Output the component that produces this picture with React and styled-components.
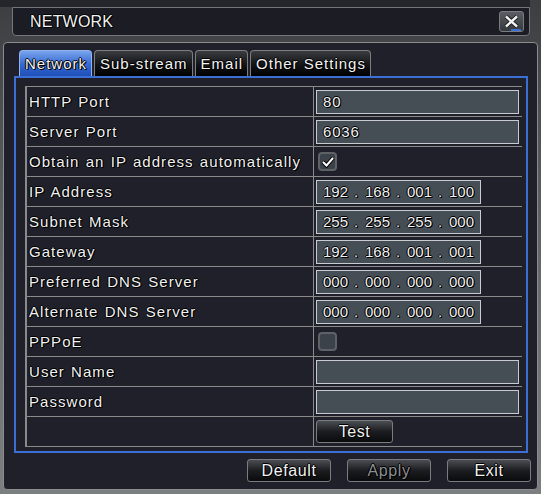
import styled, { createGlobalStyle } from "styled-components";

const GlobalStyle = createGlobalStyle`
  html, body {
    margin: 0;
    padding: 0;
    background: #4c4f52;
  }
  * {
    box-sizing: border-box;
  }
`;

const outline = `
  text-shadow: 1px 1px 0 #000, -1px 0 0 #000, 0 -1px 0 #000, 1px 0 0 #000;
`;

const Page = styled.div`
  width: 541px;
  height: 494px;
  overflow: hidden;
  background: linear-gradient(#3c3e42, #6a6d6e 60%, #7c7f7f);
  font-family: "Liberation Sans", Arial, sans-serif;
  color: #f2f2f2;
`;

const TopStrip = styled.div`
  width: 530px;
  height: 7px;
  background: #25262c;
`;

const TitleBar = styled.div`
  margin-left: 12px;
  width: 518px;
  height: 29px;
  display: flex;
  align-items: center;
  justify-content: space-between;
  padding: 0 5px 0 17px;
  background: #1c1d24;
  border: 1px solid #74777a;
  border-radius: 0 0 4px 4px;
`;

const Title = styled.div`
  font-size: 16px;
  letter-spacing: 0.2px;
  ${outline}
`;

const CloseButton = styled.div`
  position: relative;
  width: 25px;
  height: 21px;
  display: flex;
  align-items: center;
  justify-content: center;
  background: linear-gradient(#5a5d62, #35383c);
  border: 1px solid #7a7d80;
  border-radius: 3px;

  &::after {
    content: "";
    position: absolute;
    left: 11px;
    bottom: 0;
    width: 10px;
    height: 2px;
    background: #3b6fd6;
  }
`;

const Panel = styled.div`
  margin: 6px 3px 0 3px;
  width: 535px;
  height: 448px;
  background: #1f2029;
  border: 1px solid #8a8c8e;
  border-radius: 4px;
  display: flex;
  flex-direction: column;
`;

const Tabs = styled.div`
  display: flex;
  gap: 2px;
  margin: 7px 0 0 15px;
  height: 26px;
`;

const Tab = styled.div`
  height: 26px;
  padding: 0 4px 0 5px;
  display: flex;
  align-items: center;
  font-size: 15px;
  letter-spacing: 1px;
  border: 1px solid ${(p) => (p.$active ? "#8fb3f0" : "#7c7e82")};
  border-bottom: none;
  border-radius: 4px 4px 0 0;
  background: ${(p) =>
    p.$active
      ? "linear-gradient(#78a4ec, #3468d2 55%, #1f4fb8)"
      : "linear-gradient(#3a3b3f, #141518 55%, #000)"};
  ${outline}
`;

const Frame = styled.div`
  margin-left: 10px;
  width: 514px;
  height: 377px;
  border: 2px solid #3b6fd6;
  padding: 8px 4px 4px 9px;
`;

const Table = styled.div`
  display: grid;
  grid-template-columns: 287px 1fr;
  grid-auto-rows: 30px;
  border-top: 1px solid #8a8a8a;
  border-left: 2px solid #8a8a8a;
`;

const Label = styled.div`
  display: flex;
  align-items: center;
  padding-left: 2px;
  font-size: 15px;
  letter-spacing: 1.05px;
  word-spacing: 1px;
  border-right: 1px solid #8a8a8a;
  border-bottom: 1px solid #8a8a8a;
  ${outline}
`;

const Value = styled.div`
  display: flex;
  align-items: center;
  padding-left: 2px;
  border-bottom: 1px solid #8a8a8a;
`;

const Field = styled.div`
  width: ${(p) => (p.$short ? "165px" : "203px")};
  height: 24px;
  display: flex;
  align-items: center;
  padding-left: 6px;
  background: #454d55;
  border: 1px solid #c8ccd0;
  font-size: 15px;
  letter-spacing: 0.8px;
  ${outline}
`;

const Segment = styled.span`
  width: 25px;
  letter-spacing: 0;
  font-size: 15px;
`;

const Dot = styled.span`
  width: 17px;
  text-align: center;
`;

const CheckBox = styled.div`
  margin-left: 2px;
  width: 19px;
  height: 19px;
  display: flex;
  align-items: center;
  justify-content: center;
  background: #3c4249;
  border: 2px solid #5e6166;
  border-radius: 4px;
`;

const Button = styled.div`
  width: ${(p) => p.$w || 84}px;
  height: 23px;
  display: flex;
  align-items: center;
  justify-content: center;
  font-size: 16px;
  letter-spacing: 0.6px;
  color: ${(p) => (p.$disabled ? "#8d8f92" : "#f2f2f2")};
  background: linear-gradient(#4a4d52, #1c1d20 50%, #0a0b0d);
  border: 1px solid #7a7c80;
  border-radius: 3px;
  ${outline}
`;

const Footer = styled.div`
  display: flex;
  justify-content: flex-end;
  gap: 16px;
  margin-top: 6px;
  padding-right: 6px;
`;

const Ip = ({ value }) => {
  const parts = value.split(".");
  return (
    <Field $short>
      {parts.map((p, i) => (
        <span key={i} style={{ display: "contents" }}>
          {i > 0 && <Dot>.</Dot>}
          <Segment>{p}</Segment>
        </span>
      ))}
    </Field>
  );
};

const Check = ({ checked }) => (
  <CheckBox>
    {checked && (
      <svg width="14" height="12" viewBox="0 0 14 12">
        <path d="M2 6 L5.5 9.5 L12 2" fill="none" stroke="#000" strokeWidth="4" />
        <path d="M2 6 L5.5 9.5 L12 2" fill="none" stroke="#fff" strokeWidth="2" />
      </svg>
    )}
  </CheckBox>
);

const rows = [
  ["HTTP Port", <Field>80</Field>],
  ["Server Port", <Field>6036</Field>],
  ["Obtain an IP address automatically", <Check checked />],
  ["IP Address", <Ip value="192.168.001.100" />],
  ["Subnet Mask", <Ip value="255.255.255.000" />],
  ["Gateway", <Ip value="192.168.001.001" />],
  ["Preferred DNS Server", <Ip value="000.000.000.000" />],
  ["Alternate DNS Server", <Ip value="000.000.000.000" />],
  ["PPPoE", <Check />],
  ["User Name", <Field />],
  ["Password", <Field />],
  ["", <Button $w={77}>Test</Button>],
];

const App = () => {
  return (
    <Page>
      <GlobalStyle />
      <TopStrip />
      <TitleBar>
        <Title>NETWORK</Title>
        <CloseButton>
          <svg width="15" height="13" viewBox="0 0 15 13">
            <path d="M2 1.5 L13 11.5 M13 1.5 L2 11.5" stroke="#111" strokeWidth="4" />
            <path d="M2 1.5 L13 11.5 M13 1.5 L2 11.5" stroke="#f4f4f4" strokeWidth="2.4" />
          </svg>
        </CloseButton>
      </TitleBar>
      <Panel>
        <Tabs>
          <Tab $active>Network</Tab>
          <Tab>Sub-stream</Tab>
          <Tab>Email</Tab>
          <Tab>Other Settings</Tab>
        </Tabs>
        <Frame>
          <Table>
            {rows.map(([label, value], i) => (
              <div key={i} style={{ display: "contents" }}>
                <Label>{label}</Label>
                <Value>{value}</Value>
              </div>
            ))}
          </Table>
        </Frame>
        <Footer>
          <Button>Default</Button>
          <Button $disabled>Apply</Button>
          <Button>Exit</Button>
        </Footer>
      </Panel>
    </Page>
  );
};

export default App;
